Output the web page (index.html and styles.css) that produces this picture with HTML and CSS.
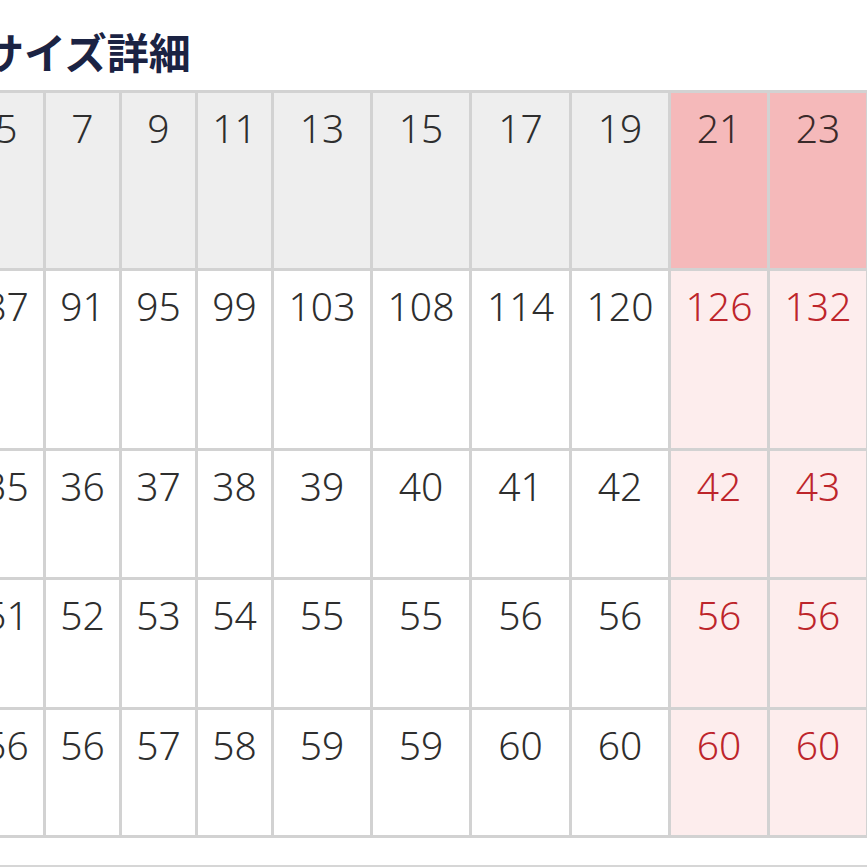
FILE: index.html
```html
<!DOCTYPE html>
<html lang="ja">
<head>
<meta charset="utf-8">
<title>サイズ詳細</title>
<link rel="stylesheet" href="styles.css">
</head>
<body>
<div class="page">
  <h2 class="title">サイズ詳細</h2>
  <div class="size-table">
    <div class="cell head">5</div>
    <div class="cell head">7</div>
    <div class="cell head">9</div>
    <div class="cell head">11</div>
    <div class="cell head">13</div>
    <div class="cell head">15</div>
    <div class="cell head">17</div>
    <div class="cell head">19</div>
    <div class="cell head hl">21</div>
    <div class="cell head hl">23</div>

    <div class="cell tall">87</div>
    <div class="cell tall">91</div>
    <div class="cell tall">95</div>
    <div class="cell tall">99</div>
    <div class="cell tall">103</div>
    <div class="cell tall">108</div>
    <div class="cell tall">114</div>
    <div class="cell tall">120</div>
    <div class="cell tall hl">126</div>
    <div class="cell tall hl">132</div>

    <div class="cell">35</div>
    <div class="cell">36</div>
    <div class="cell">37</div>
    <div class="cell">38</div>
    <div class="cell">39</div>
    <div class="cell">40</div>
    <div class="cell">41</div>
    <div class="cell">42</div>
    <div class="cell hl">42</div>
    <div class="cell hl">43</div>

    <div class="cell">51</div>
    <div class="cell">52</div>
    <div class="cell">53</div>
    <div class="cell">54</div>
    <div class="cell">55</div>
    <div class="cell">55</div>
    <div class="cell">56</div>
    <div class="cell">56</div>
    <div class="cell hl">56</div>
    <div class="cell hl">56</div>

    <div class="cell">56</div>
    <div class="cell">56</div>
    <div class="cell">57</div>
    <div class="cell">58</div>
    <div class="cell">59</div>
    <div class="cell">59</div>
    <div class="cell">60</div>
    <div class="cell">60</div>
    <div class="cell hl">60</div>
    <div class="cell hl">60</div>
  </div>
  <div class="rule"></div>
</div>
</body>
</html>
```
FILE: styles.css
```css
html, body {
  margin: 0;
  padding: 0;
  background: #ffffff;
}

.page {
  width: 867px;
  height: 867px;
  overflow: hidden;
  position: relative;
}

.title {
  margin: 0 0 0 -18px;
  height: 90px;
  box-sizing: border-box;
  padding-top: 27px;
  font-family: "Noto Sans CJK JP", "Noto Sans", sans-serif;
  font-weight: 700;
  font-size: 42px;
  line-height: 48px;
  color: #1b2343;
  white-space: nowrap;
}

.size-table {
  display: grid;
  grid-template-columns: 73px 73px 73px 73px 96px 96px 97px 96px 96px 96px;
  grid-template-rows: 175px 177px 126px 127px 125px;
  gap: 3px;
  width: max-content;
  margin-left: -33px;
  border: 3px solid #d2d2d2;
  background: #d2d2d2;
}

.cell {
  background: #ffffff;
  color: #2e2e2e;
  font-family: "Noto Sans", "Liberation Sans", sans-serif;
  font-weight: 350;
  font-size: 39px;
  line-height: 48px;
  padding-top: 11px;
  text-align: center;
}

.cell.head {
  background: #eeeeee;
}

.cell.hl {
  background: #fdeded;
  color: #bd252b;
}

.cell.head.hl {
  background: #f5b9ba;
  color: #3a2a2a;
}

.rule {
  margin-top: 27px;
  height: 2px;
  background: #d6d6d6;
}
```
